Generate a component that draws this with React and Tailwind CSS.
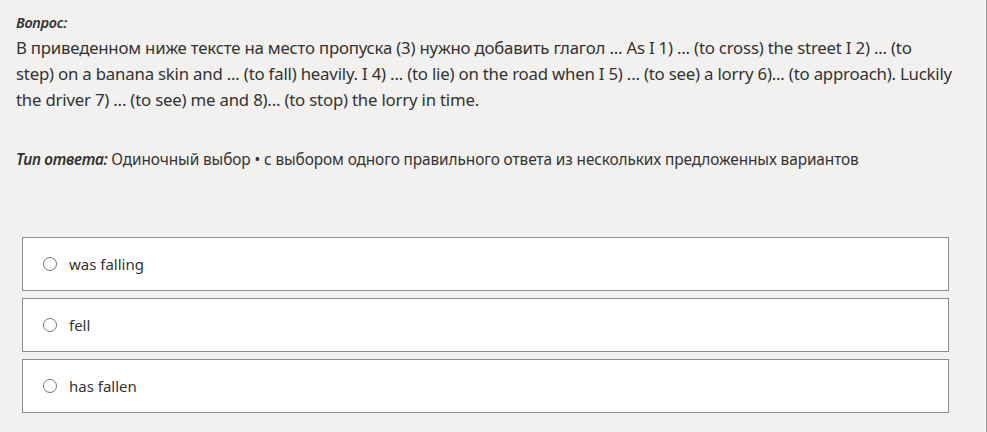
export default function App() {
  const options = ["was falling", "fell", "has fallen"];
  return (
    <div
      className="h-[432px] w-[987px] overflow-hidden border-r border-[#a0a0a0] bg-[#f2f1ef] text-[#333]"
      style={{ fontFamily: '"Noto Sans", sans-serif' }}
    >
      <div className="px-4 pt-[9px] leading-[26px]">
        <p className="italic font-semibold text-[14.5px] tracking-[-0.3px]">Вопрос:</p>
        <p className="whitespace-nowrap text-[16.8px] tracking-[-0.2px]">
          В приведенном ниже тексте на место пропуска (3) нужно добавить глагол ... As I 1) ... (to cross) the street I 2) ... (to
          <br />
          step) on a banana skin and ... (to fall) heavily. I 4) ... (to lie) on the road when I 5) ... (to see) a lorry 6)... (to approach). Luckily
          <br />
          the driver 7) ... (to see) me and 8)... (to stop) the lorry in time.
        </p>
        <p className="mt-[34px] text-[15.4px] tracking-[-0.1px]">
          <span className="italic font-semibold tracking-[-0.3px]">Тип ответа:</span> Одиночный выбор • с выбором одного правильного ответа из нескольких предложенных вариантов
        </p>
      </div>
      <div className="mt-[64px] ml-[22px] flex w-[927px] flex-col gap-[7px]">
        {options.map((o) => (
          <label
            key={o}
            className="flex h-[54px] items-center gap-[12px] border border-[#8c8c8c] bg-white pl-[20px] text-[15px]"
          >
            <span className="h-[14px] w-[14px] rounded-full border-[1.5px] border-[#777]" />
            <span>{o}</span>
          </label>
        ))}
      </div>
    </div>
  );
}
